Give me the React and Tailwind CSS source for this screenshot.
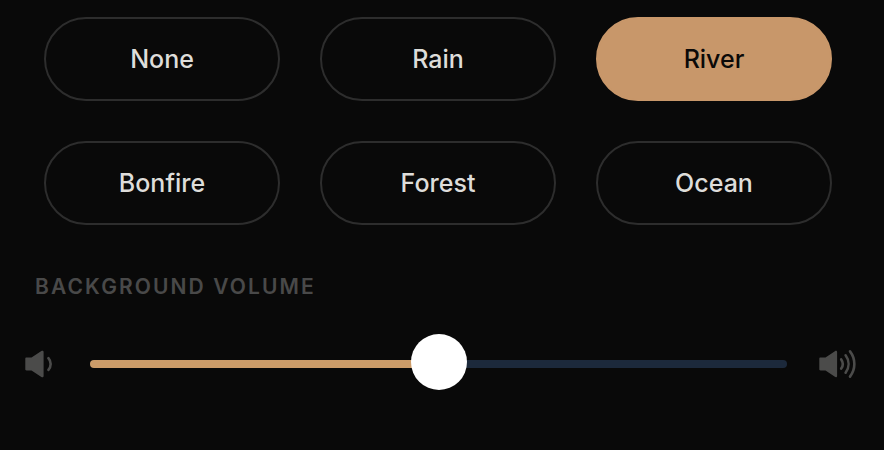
import React, { useState } from 'react';

const sounds = ['None', 'Rain', 'River', 'Bonfire', 'Forest', 'Ocean'];

function SpeakerLow() {
  return (
    <svg className="h-8 w-8 shrink-0 text-[#4b4b4a]" viewBox="0 0 32 32" fill="none" aria-hidden="true">
      <path
        d="M1.5 9.6h5L16.4 3c1.1-.7 2.2-.3 2.2.9v24.2c0 1.2-1.1 1.6-2.2.9l-9.9-6.6h-5c-.8 0-1.2-.4-1.2-1.2V10.8c0-.8.4-1.2 1.2-1.2z"
        fill="currentColor"
      />
      <path d="M23.4 10.2c3 3.4 3 8.2 0 11.6" stroke="currentColor" strokeWidth="2.6" strokeLinecap="round" />
    </svg>
  );
}

function SpeakerHigh() {
  return (
    <svg className="h-8 w-10 shrink-0 text-[#4b4b4a]" viewBox="0 0 40 32" fill="none" aria-hidden="true">
      <path
        d="M1.5 9.6h5l9.4-6.4c1.1-.7 2.2-.3 2.2.9v23.8c0 1.2-1.1 1.6-2.2.9l-9.4-6.4h-5c-.8 0-1.2-.4-1.2-1.2V10.8c0-.8.4-1.2 1.2-1.2z"
        fill="currentColor"
      />
      <g stroke="currentColor" strokeWidth="2.6" strokeLinecap="round">
        <path d="M22.2 11.4c2 2.8 2 6.4 0 9.2" />
        <path d="M26.6 7.3c3.9 5.3 3.9 12.1 0 17.4" />
        <path d="M31 3.4c5.8 7.6 5.8 17.6 0 25.2" />
      </g>
    </svg>
  );
}

function App() {
  const [selected, setSelected] = useState('River');
  const [volume, setVolume] = useState(50);

  return (
    <main className="min-h-screen w-full bg-[#090909] pt-[17px] pb-8 font-['Inter',sans-serif]">
      <div className="grid grid-cols-3 gap-10 pr-13 pl-11">
        {sounds.map((sound) => (
          <button
            key={sound}
            type="button"
            aria-pressed={selected === sound}
            onClick={() => setSelected(sound)}
            className={
              selected === sound
                ? 'h-[84px] rounded-full border-2 border-[#c8976a] bg-[#c8976a] pt-0.5 text-[25px] font-medium text-[#0b0908]'
                : 'h-[84px] rounded-full border-2 border-[#2d2d2d] pt-0.5 text-[25px] font-medium text-[#deddda]'
            }
          >
            {sound}
          </button>
        ))}
      </div>

      <label
        htmlFor="volume"
        className="mt-12 block pl-[35px] text-[21px] leading-7 font-semibold tracking-widest text-[#494949] uppercase"
      >
        Background Volume
      </label>

      <div className="mt-[35px] flex items-center pr-[25px] pl-[25px]">
        <SpeakerLow />
        <input
          id="volume"
          type="range"
          min="0"
          max="100"
          value={volume}
          onChange={(e) => setVolume(Number(e.target.value))}
          style={{ '--level': `${volume}%` }}
          className="mr-8 ml-[33px] h-14 min-w-0 flex-1 cursor-pointer appearance-none bg-transparent [&::-webkit-slider-runnable-track]:h-2 [&::-webkit-slider-runnable-track]:rounded-full [&::-webkit-slider-runnable-track]:bg-[linear-gradient(to_right,#cc9c69_var(--level),#1c293b_var(--level))] [&::-webkit-slider-thumb]:-mt-[26px] [&::-webkit-slider-thumb]:size-14 [&::-webkit-slider-thumb]:appearance-none [&::-webkit-slider-thumb]:rounded-full [&::-webkit-slider-thumb]:bg-white"
        />
        <SpeakerHigh />
      </div>
    </main>
  );
}

export default App;
